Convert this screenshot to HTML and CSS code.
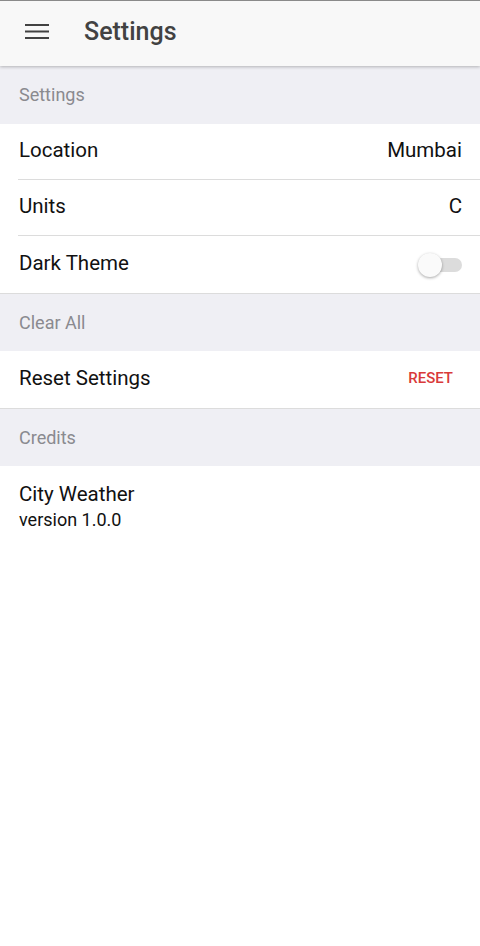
FILE: index.html
```html
<!DOCTYPE html>
<html lang="en">
<head>
    <meta charset="UTF-8">
    <meta name="viewport" content="width=device-width, initial-scale=1.0">
    <title>Settings</title>
    <link rel="stylesheet" href="styles.css">
</head>
<body>

<header class="toolbar">
    <button class="menu-button" aria-label="Menu">
        <svg width="24" height="16" viewBox="0 0 24 16">
            <path d="M0 1h24M0 7.5h24M0 14h24" stroke="#424242" stroke-width="2.2" fill="none"/>
        </svg>
    </button>
    <h1 class="toolbar-title">Settings</h1>
</header>

<div class="list">
    <div class="list-header">Settings</div>
    <div class="list-item">
        <span class="item-label">Location</span>
        <span class="item-value">Mumbai</span>
    </div>
    <div class="list-item">
        <span class="item-label">Units</span>
        <span class="item-value">C</span>
    </div>
    <div class="list-item last">
        <span class="item-label">Dark Theme</span>
        <span class="toggle"><span class="toggle-knob"></span></span>
    </div>

    <div class="list-header">Clear All</div>
    <div class="list-item last">
        <span class="item-label">Reset Settings</span>
        <button class="reset-button">RESET</button>
    </div>

    <div class="list-header">Credits</div>
    <div class="list-item credits">
        <span class="item-label">City Weather</span>
        <span class="item-sub">version 1.0.0</span>
    </div>
</div>

</body>
</html>
```

FILE: styles.css
```css
body {
    margin: 0;
    font-family: Roboto, "Noto Sans", sans-serif;
    background-color: #fff;
    color: #111;
    border-top: 1px solid #8a8a8a;
}

/* Top bar */
.toolbar {
    display: flex;
    align-items: center;
    height: 61px;
    padding-bottom: 4px;
    background-color: #f8f8f8;
    box-shadow: 0 1px 3px rgba(0, 0, 0, 0.25);
    position: relative;
}

.menu-button {
    border: none;
    background: none;
    padding: 0;
    margin-left: 25px;
    width: 24px;
    height: 16px;
    display: flex;
}

.toolbar-title {
    margin: 0 0 0 35px;
    font-size: 25px;
    font-weight: 500;
    color: #424242;
}

/* List */
.list-header {
    height: 56px;
    padding-bottom: 1px;
    display: flex;
    align-items: center;
    padding-left: 19px;
    background-color: #efeff4;
    color: #8a8a8f;
    font-size: 18px;
}

.list-header:first-child {
    height: 57px;
}

.list-item {
    display: flex;
    align-items: center;
    justify-content: space-between;
    height: 51px;
    padding-bottom: 4px;
    margin-left: 18px;
    padding-left: 1px;
    padding-right: 18px;
    border-bottom: 1px solid #dcdcdc;
    font-size: 20.5px;
}

.list-item.last {
    margin-left: 0;
    padding-left: 19px;
    height: 53px;
}

.item-value {
    color: #111;
}

.toggle {
    position: relative;
    width: 36px;
    height: 14px;
    border-radius: 7px;
    background-color: #dcdcdc;
    margin-top: 5px;
}

.toggle-knob {
    position: absolute;
    left: -8px;
    top: -5px;
    width: 24px;
    height: 24px;
    border-radius: 50%;
    background-color: #fafafa;
    box-shadow: 0 1px 3px rgba(0, 0, 0, 0.35);
}

.reset-button {
    border: none;
    background: none;
    padding: 0;
    margin-right: 9px;
    font-family: Roboto, sans-serif;
    font-size: 15px;
    font-weight: 500;
    color: #d93a3a;
}

.list-item.credits {
    flex-direction: column;
    align-items: flex-start;
    justify-content: flex-start;
    height: auto;
    border-bottom: none;
    padding-top: 16px;
}

.item-sub {
    font-size: 18px;
    margin-top: 3px;
}
```
